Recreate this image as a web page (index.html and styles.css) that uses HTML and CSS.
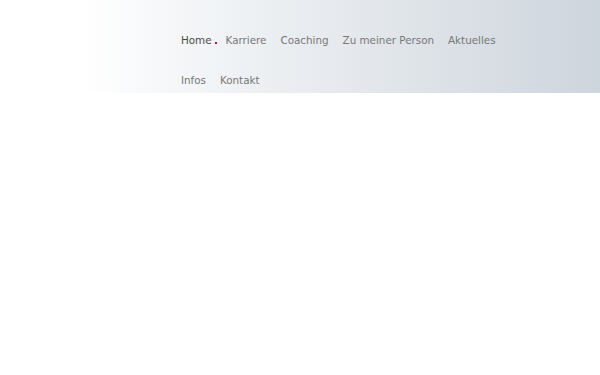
FILE: index.html
```html
<!DOCTYPE html>
<html lang="de">
<head>
    <meta charset="UTF-8">
    <meta name="viewport" content="width=device-width, initial-scale=1.0">
    <title>Home</title>
    <link rel="stylesheet" href="styles.css">
</head>
<body>
    <header class="site-header">
        <nav class="main-nav">
            <a href="#" class="nav-item active">Home<span class="dot"></span></a>
            <a href="#" class="nav-item">Karriere</a>
            <a href="#" class="nav-item">Coaching</a>
            <a href="#" class="nav-item">Zu meiner Person</a>
            <a href="#" class="nav-item">Aktuelles</a>
            <a href="#" class="nav-item">Infos</a>
            <a href="#" class="nav-item">Kontakt</a>
        </nav>
    </header>
</body>
</html>
```

FILE: styles.css
```css
body { margin: 0; font-family: "DejaVu Sans", sans-serif; background: #fff; }
.site-header { height: 93px; background: linear-gradient(to right, #fff 0, #fff 14%, #f4f6f8 30%, #e3e7eb 62%, #cdd5dd 100%); }
.main-nav { margin-left: 181px; padding-top: 20px; width: 335px; display: flex; flex-wrap: wrap; column-gap: 14px; }
.nav-item { font-size: 10.35px; line-height: 40px; color: #777; text-decoration: none; }
.nav-item.active { color: #4a4a4a; position: relative; }
.dot { position: absolute; right: -5px; top: 22px; width: 2px; height: 2px; background: #d0103a; }
```
